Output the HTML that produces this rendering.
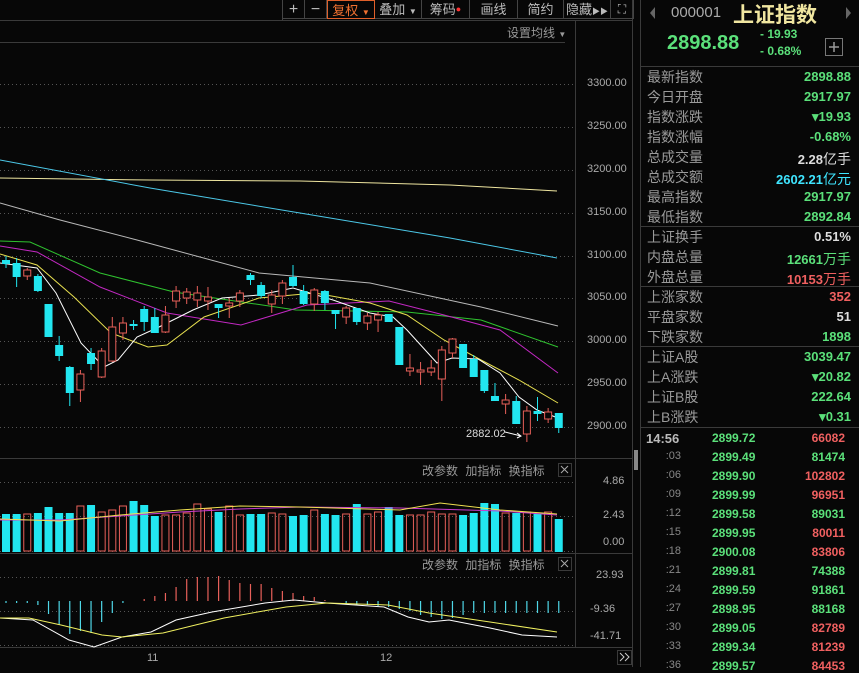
<!DOCTYPE html>
<html><head><meta charset="utf-8">
<style>
html,body{margin:0;padding:0;background:#070707;width:859px;height:667px;overflow:hidden;font-family:"Liberation Sans","Noto Sans CJK SC",sans-serif;}
.abs{position:absolute;white-space:nowrap}
#tb{position:absolute;left:282px;top:0;height:20px;display:flex;border-left:1px solid #444;}
#tb div{height:19px;border-right:1px solid #444;border-bottom:1px solid #444;color:#bbb;font-size:13px;line-height:19px;text-align:center;box-sizing:border-box;white-space:nowrap;overflow:hidden;padding:0}
.lbl{color:#9a9a9a;font-size:14px;left:647px}
.val{font-size:13px;font-weight:bold;right:8px;text-align:right}
.g{color:#5be07a}.r{color:#f06060}.w{color:#ddd}.c{color:#3fe5ff}
.tk{font-size:12px;font-weight:bold}
</style></head><body>
<svg width="859" height="667" style="position:absolute;left:0;top:0" id="sv">
<g stroke="#555" stroke-width="1" stroke-dasharray="1,3">
<line x1="0" y1="84.5" x2="575" y2="84.5"/><line x1="0" y1="127.5" x2="575" y2="127.5"/><line x1="0" y1="170.5" x2="575" y2="170.5"/><line x1="0" y1="213.5" x2="575" y2="213.5"/><line x1="0" y1="256.5" x2="575" y2="256.5"/><line x1="0" y1="298.5" x2="575" y2="298.5"/><line x1="0" y1="341.5" x2="575" y2="341.5"/><line x1="0" y1="384.5" x2="575" y2="384.5"/><line x1="0" y1="427.5" x2="575" y2="427.5"/>
<line x1="0" y1="482.5" x2="575" y2="482.5"/><line x1="0" y1="516.5" x2="575" y2="516.5"/><line x1="0" y1="551.5" x2="575" y2="551.5"/>
<line x1="0" y1="577.5" x2="575" y2="577.5"/><line x1="0" y1="611.5" x2="575" y2="611.5"/><line x1="0" y1="645.5" x2="575" y2="645.5"/>
</g>
<g stroke="#3a3a3a" fill="none">
<line x1="0" y1="20.5" x2="632" y2="20.5"/>
<line x1="0" y1="42.5" x2="565" y2="42.5"/>
<line x1="575.5" y1="20" x2="575.5" y2="647"/>
<line x1="0" y1="458.5" x2="632" y2="458.5"/>
<line x1="0" y1="553.5" x2="632" y2="553.5"/>
<line x1="0" y1="647.5" x2="632" y2="647.5"/>
<line x1="632.5" y1="0" x2="632.5" y2="667"/>
<line x1="640.5" y1="0" x2="640.5" y2="667"/>
<line x1="641" y1="66.5" x2="859" y2="66.5"/>
<line x1="641" y1="226.5" x2="859" y2="226.5"/>
<line x1="641" y1="286.5" x2="859" y2="286.5"/>
<line x1="641" y1="346.5" x2="859" y2="346.5"/>
<line x1="641" y1="427.5" x2="859" y2="427.5"/>
<rect x="558.5" y="463.5" width="13" height="13"/>
<rect x="558.5" y="557.5" width="13" height="13"/>
<rect x="617.5" y="650.5" width="14" height="14"/>
<rect x="825.5" y="38.5" width="17" height="17" stroke="#777"/>
</g>
<path d="M561 466l7 7M568 466l-7 7M561 560l7 7M568 560l-7 7" stroke="#aaa"/>
<path d="M620 653l4 4-4 4M625 653l4 4-4 4" stroke="#ccc" fill="none"/>
<path d="M834 42v10M829 47h10" stroke="#999" stroke-width="1.5"/>
<path d="M655 7l-5 6 5 6z" fill="#666"/><path d="M846 7l5 6-5 6z" fill="#666"/>
<rect x="634" y="450" width="4" height="20" fill="#888"/>
<g fill="none" stroke-width="1">
<polyline stroke="#efe6a0" points="0,178 150,180 300,181 450,185 557,191"/>
<polyline stroke="#4cc8e8" points="0,160 150,188 300,213 450,238 557,258"/>
<polyline stroke="#b8b8b8" points="0,203 60,220 137,240 259,273 370,283 481,307 558,326"/>
<polyline stroke="#2fc22f" points="0,241 30,242 100,273 174,292 296,310 407,312 481,320 558,347"/>
<polyline stroke="#c228c2" points="0,246 37,252 100,287 167,313 241,325 307,305 389,301 444,315 500,330 558,373"/>
<polyline stroke="#e8e050" points="0,254 37,265 74,297 111,333 148,347 167,345 204,317 259,298 315,293 370,303 407,315 444,340 481,360 519,380 558,403"/>
<polyline stroke="#ffffff" points="0,263 37,268 56,293 81,343 104,367 118,360 137,337 159,327 193,310 222,298 259,295 293,288 333,300 370,313 393,317 407,330 437,363 452,358 478,359 500,373 519,397 537,410 558,418"/>
</g>
<g id="cd"></g><g id="vb"></g><g id="mh"></g>
<g fill="none" stroke-width="1">
<polyline stroke="#c83bd0" points="0,520 60,520 120,516 180,512 240,509 300,507 400,508 500,511 557,515"/>
<polyline stroke="#f0e050" points="0,519 60,521 120,515 180,510 240,506 300,507 400,510 440,503 500,510 557,514"/>
<polyline stroke="#ffffff" points="0,618 33,620 69,640 94,647 122,637 151,632 176,620 212,612 265,603 294,600 327,603 384,607 408,617 429,622 449,620 490,628 522,635 557,637"/>
<polyline stroke="#f0f060" points="0,618 29,618 61,625 102,635 122,637 163,633 224,618 286,607 327,603 388,605 429,613 490,622 557,632"/>
</g>
<path d="M505 432l16 4M517 433l4 3-4 2" stroke="#fff" fill="none"/>
</svg>
<div id="tb">
<div style="width:22px;font-size:16px">+</div><div style="width:22px;font-size:16px">−</div>
<div style="width:48px;color:#f07030;border:1px solid #e0602a">复权 <span style="font-size:8px">▼</span></div>
<div style="width:47px">叠加 <span style="font-size:8px">▼</span></div>
<div style="width:48px">筹码<span style="color:#f33;font-size:9px;vertical-align:top">●</span></div>
<div style="width:48px">画线</div><div style="width:46px">简约</div>
<div style="width:47px">隐藏<span style="font-size:8px">▶▶</span></div><div style="width:23px;font-size:12px">⛶</div>
</div>
<div class="abs" style="left:507px;top:24px;color:#999;font-size:12px">设置均线 <span style="font-size:8px">▼</span></div>
<div class="abs" style="left:587px;top:77px;color:#aaa;font-size:11px">3300.00</div>
<div class="abs" style="left:587px;top:120px;color:#aaa;font-size:11px">3250.00</div>
<div class="abs" style="left:587px;top:163px;color:#aaa;font-size:11px">3200.00</div>
<div class="abs" style="left:587px;top:206px;color:#aaa;font-size:11px">3150.00</div>
<div class="abs" style="left:587px;top:249px;color:#aaa;font-size:11px">3100.00</div>
<div class="abs" style="left:587px;top:291px;color:#aaa;font-size:11px">3050.00</div>
<div class="abs" style="left:587px;top:334px;color:#aaa;font-size:11px">3000.00</div>
<div class="abs" style="left:587px;top:377px;color:#aaa;font-size:11px">2950.00</div>
<div class="abs" style="left:587px;top:420px;color:#aaa;font-size:11px">2900.00</div>
<div class="abs" style="left:466px;top:428px;color:#ddd;font-size:11px">2882.02</div>
<div class="abs" style="left:422px;top:462px;color:#999;font-size:12px;word-spacing:4px">改参数 加指标 换指标</div>
<div class="abs" style="left:422px;top:556px;color:#999;font-size:12px;word-spacing:4px">改参数 加指标 换指标</div>
<div class="abs" style="left:603px;top:475px;color:#aaa;font-size:11px">4.86</div>
<div class="abs" style="left:603px;top:509px;color:#aaa;font-size:11px">2.43</div>
<div class="abs" style="left:603px;top:536px;color:#aaa;font-size:11px">0.00</div>
<div class="abs" style="left:596px;top:569px;color:#aaa;font-size:11px">23.93</div>
<div class="abs" style="left:590px;top:603px;color:#aaa;font-size:11px">-9.36</div>
<div class="abs" style="left:590px;top:630px;color:#aaa;font-size:11px">-41.71</div>
<div class="abs" style="left:147px;top:652px;color:#aaa;font-size:11px">11</div>
<div class="abs" style="left:380px;top:652px;color:#aaa;font-size:11px">12</div>

<div class="abs" style="left:671px;top:4px;color:#aaa;font-size:15px">000001</div>
<div class="abs" style="left:733px;top:-1px;color:#f0e6a0;font-size:21px;font-weight:bold">上证指数</div>
<div class="abs" style="left:667px;top:32px;color:#5be07a;font-size:20px;font-weight:bold">2898.88</div>
<div class="abs" style="left:760px;top:27px;color:#5be07a;font-size:12px;font-weight:bold">- 19.93</div>
<div class="abs" style="left:760px;top:44px;color:#5be07a;font-size:12px;font-weight:bold">- 0.68%</div>

<div class="abs lbl" style="top:67px">最新指数</div><div class="abs val g" style="top:69px">2898.88</div>
<div class="abs lbl" style="top:87px">今日开盘</div><div class="abs val g" style="top:89px">2917.97</div>
<div class="abs lbl" style="top:107px">指数涨跌</div><div class="abs val g" style="top:109px">▾19.93</div>
<div class="abs lbl" style="top:127px">指数涨幅</div><div class="abs val g" style="top:129px">-0.68%</div>
<div class="abs lbl" style="top:147px">总成交量</div><div class="abs val w" style="top:149px">2.28<span style="font-weight:normal;font-size:14px">亿手</span></div>
<div class="abs lbl" style="top:167px">总成交额</div><div class="abs val c" style="top:169px">2602.21<span style="font-weight:normal;font-size:14px">亿元</span></div>
<div class="abs lbl" style="top:187px">最高指数</div><div class="abs val g" style="top:189px">2917.97</div>
<div class="abs lbl" style="top:207px">最低指数</div><div class="abs val g" style="top:209px">2892.84</div>
<div class="abs lbl" style="top:227px">上证换手</div><div class="abs val w" style="top:229px">0.51%</div>
<div class="abs lbl" style="top:247px">内盘总量</div><div class="abs val g" style="top:249px">12661<span style="font-weight:normal;font-size:14px">万手</span></div>
<div class="abs lbl" style="top:267px">外盘总量</div><div class="abs val r" style="top:269px">10153<span style="font-weight:normal;font-size:14px">万手</span></div>
<div class="abs lbl" style="top:287px">上涨家数</div><div class="abs val r" style="top:289px">352</div>
<div class="abs lbl" style="top:307px">平盘家数</div><div class="abs val w" style="top:309px">51</div>
<div class="abs lbl" style="top:327px">下跌家数</div><div class="abs val g" style="top:329px">1898</div>
<div class="abs lbl" style="top:347px">上证A股</div><div class="abs val g" style="top:349px">3039.47</div>
<div class="abs lbl" style="top:367px">上A涨跌</div><div class="abs val g" style="top:369px">▾20.82</div>
<div class="abs lbl" style="top:387px">上证B股</div><div class="abs val g" style="top:389px">222.64</div>
<div class="abs lbl" style="top:407px">上B涨跌</div><div class="abs val g" style="top:409px">▾0.31</div>
<div id="ticks"></div>
<script>
var ticks=[["14:56","2899.72","66082","r"],[":03","2899.49","81474","g"],[":06","2899.90","102802","r"],[":09","2899.99","96951","r"],[":12","2899.58","89031","g"],[":15","2899.95","80011","r"],[":18","2900.08","83806","r"],[":21","2899.81","74388","g"],[":24","2899.59","91861","g"],[":27","2898.95","88168","g"],[":30","2899.05","82789","r"],[":33","2899.34","81239","r"],[":36","2899.57","84453","r"]];
var h="";ticks.forEach(function(t,i){var y=431+i*19;
h+='<div class="abs tk" style="'+(i==0?'left:646px;color:#bbb;font-size:13px':'right:178px;color:#888;font-weight:normal;font-size:11px')+';top:'+y+'px">'+t[0]+'</div>';
h+='<div class="abs tk g" style="left:712px;top:'+y+'px">'+t[1]+'</div>';
h+='<div class="abs tk '+t[3]+'" style="right:14px;top:'+y+'px">'+t[2]+'</div>';});
document.getElementById("ticks").innerHTML=h;
var C=[[260,264,256,268,0],[263,277,258,287,0],[270,276,268,280,1],[276,291,274,292,0],[304,337,304,337,0],[345,356,336,361,0],[367,393,366,406,0],[374,390,370,402,1],[353,364,348,370,0],[351,377,348,378,1],[327,361,317,362,1],[323,333,317,340,1],[324,326,320,330,0],[309,322,306,331,0],[317,333,308,333,0],[315,332,306,333,1],[291,301,286,308,1],[292,298,288,304,1],[293,300,286,307,1],[297,301,287,310,1],[304,308,304,318,0],[303,306,298,318,1],[293,301,290,307,1],[275,280,273,285,0],[285,296,282,298,0],[295,304,290,313,1],[283,296,280,304,1],[277,286,265,287,0],[291,304,285,305,0],[290,304,288,311,1],[291,303,290,310,0],[310,314,310,329,0],[308,317,306,324,1],[308,322,308,325,0],[316,323,313,330,1],[315,320,312,332,1],[314,322,314,322,0],[327,365,327,365,0],[368,371,354,376,1],[370,372,362,385,1],[368,372,360,376,1],[350,379,346,401,1],[339,353,338,358,1],[344,368,344,368,0],[359,377,355,377,0],[370,391,370,393,0],[396,401,383,401,0],[400,404,394,414,1],[401,424,396,424,0],[411,434,406,442,1],[411,414,397,421,0],[412,419,408,423,1],[413,428,413,433,0]];
var V=[514,514,514,513,507,513,513,506,505,512,510,506,501,505,516,515,515,513,504,509,512,506,515,514,514,513,514,516,515,510,514,515,514,504,514,512,507,515,515,515,512,514,514,515,513,503,504,513,513,512,514,512,519];
var M=[-2,-2,-2,-4,-13,-24,-33,-30,-32,-21,-12,-2,0,2,5,8,14,22,24,24,25,21,18,17,17,13,10,8,5,4,1,0,-3,-4,-4,-5,-6,-8,-10,-14,-16,-18,-17,-14,-12,-12,-12,-12,-12,-12,-12,-12,-12];
var s="",v="",m="";var cy="#22e6f0",rd="#e8605a";
C.forEach(function(c,i){var x=6+i*10.63;var col=c[4]?rd:cy;
s+='<line x1="'+x+'" y1="'+c[2]+'" x2="'+x+'" y2="'+c[3]+'" stroke="'+col+'"/>';
if(c[4])s+='<rect x="'+(x-3.5)+'" y="'+c[0]+'" width="7" height="'+Math.max(1,c[1]-c[0])+'" fill="#070707" stroke="'+col+'"/>';
else s+='<rect x="'+(x-4)+'" y="'+c[0]+'" width="8" height="'+Math.max(1.5,c[1]-c[0])+'" fill="'+col+'"/>';
var t=V[i];
if(c[4])v+='<rect x="'+(x-3.5)+'" y="'+t+'" width="7" height="'+(551-t)+'" fill="none" stroke="'+col+'"/>';
else v+='<rect x="'+(x-4)+'" y="'+t+'" width="8" height="'+(552-t)+'" fill="'+col+'"/>';
var k=M[i];if(k!=0)m+='<line x1="'+x+'" y1="601" x2="'+x+'" y2="'+(601-k)+'" stroke="'+(k>0?rd:"#4fd8e8")+'" stroke-width="1.2"/>';});
document.getElementById("cd").innerHTML=s;document.getElementById("vb").innerHTML=v;document.getElementById("mh").innerHTML=m;
</script>
</body></html>
